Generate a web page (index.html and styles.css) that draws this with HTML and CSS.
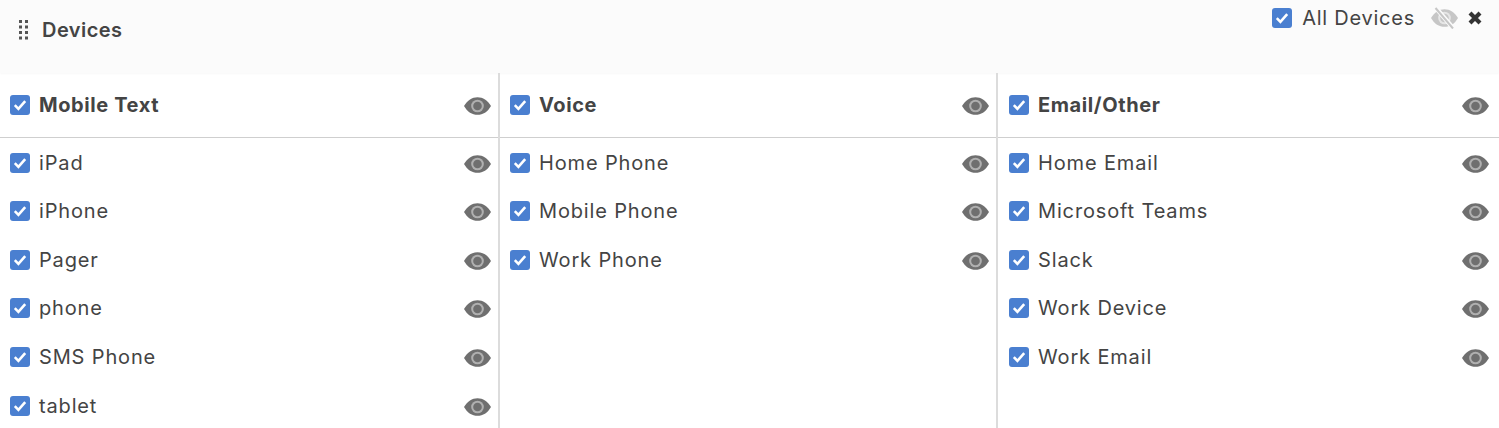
FILE: index.html
```html
<!DOCTYPE html>
<html lang="en">
<head>
    <meta charset="UTF-8">
    <title>Devices</title>
    <link rel="stylesheet" href="styles.css">
</head>
<body>
    <svg class="defs" width="0" height="0">
        <symbol id="check" viewBox="0 0 20 20">
            <rect width="20" height="20" rx="3" fill="#4a7fd0"/>
            <path d="M4.800 10.200l3.600 3.600 6.800-7.600" fill="none" stroke="#fff" stroke-width="2.600"/>
        </symbol>
        <symbol id="eye" viewBox="0 0 27 18">
            <path d="M0 9C3.500 3 8 .2 13.500 .2S23.500 3 27 9c-3.500 6-8 8.800-13.500 8.800S3.500 15 0 9z" fill="#6f6f6f"/>
            <circle cx="13.500" cy="9" r="6.300" fill="#b0b0b0"/>
            <circle cx="13.500" cy="9" r="4.300" fill="#6f6f6f"/>
        </symbol>
    </svg>

    <div class="panel-head">
        <div class="title">
            <svg class="grip" width="10" height="20" viewBox="0 0 10 20" fill="#555">
                <rect x="0" y="0" width="3" height="3"/><rect x="6" y="0" width="3" height="3"/>
                <rect x="0" y="5.500" width="3" height="3"/><rect x="6" y="5.500" width="3" height="3"/>
                <rect x="0" y="11" width="3" height="3"/><rect x="6" y="11" width="3" height="3"/>
                <rect x="0" y="16.500" width="3" height="3"/><rect x="6" y="16.500" width="3" height="3"/>
            </svg>
            <span>Devices</span>
        </div>
        <div class="actions">
            <svg class="box"><use href="#check"/></svg>
            <span class="all-label">All Devices</span>
            <svg class="eye-off" width="27" height="22" viewBox="0 0 27 22">
                <path d="M0 11C3.500 5 8 2.200 13.500 2.200S23.500 5 27 11c-3.500 6-8 8.800-13.500 8.800S3.500 17 0 11z" fill="#c6c6c6"/>
                <circle cx="13.500" cy="11" r="6.300" fill="#e6e6e6"/>
                <circle cx="13.500" cy="11" r="4.300" fill="#c6c6c6"/>
                <path d="M5 1l17 20" stroke="#fbfbfb" stroke-width="4.500"/>
                <path d="M4.500 1l17.500 20.500" stroke="#c6c6c6" stroke-width="2"/>
            </svg>
            <svg class="close" width="14" height="14" viewBox="0 0 14 14">
                <path d="M2 2l10 10M12 2L2 12" stroke="#333" stroke-width="4.200"/>
            </svg>
        </div>
    </div>

    <div class="columns">
        <div class="column">
            <div class="row head"><svg class="box"><use href="#check"/></svg><span class="name">Mobile Text</span><svg class="eye"><use href="#eye"/></svg></div>
            <div class="row"><svg class="box"><use href="#check"/></svg><span class="name">iPad</span><svg class="eye"><use href="#eye"/></svg></div>
            <div class="row"><svg class="box"><use href="#check"/></svg><span class="name">iPhone</span><svg class="eye"><use href="#eye"/></svg></div>
            <div class="row"><svg class="box"><use href="#check"/></svg><span class="name">Pager</span><svg class="eye"><use href="#eye"/></svg></div>
            <div class="row"><svg class="box"><use href="#check"/></svg><span class="name">phone</span><svg class="eye"><use href="#eye"/></svg></div>
            <div class="row"><svg class="box"><use href="#check"/></svg><span class="name">SMS Phone</span><svg class="eye"><use href="#eye"/></svg></div>
            <div class="row"><svg class="box"><use href="#check"/></svg><span class="name">tablet</span><svg class="eye"><use href="#eye"/></svg></div>
        </div>
        <div class="column">
            <div class="row head"><svg class="box"><use href="#check"/></svg><span class="name">Voice</span><svg class="eye"><use href="#eye"/></svg></div>
            <div class="row"><svg class="box"><use href="#check"/></svg><span class="name">Home Phone</span><svg class="eye"><use href="#eye"/></svg></div>
            <div class="row"><svg class="box"><use href="#check"/></svg><span class="name">Mobile Phone</span><svg class="eye"><use href="#eye"/></svg></div>
            <div class="row"><svg class="box"><use href="#check"/></svg><span class="name">Work Phone</span><svg class="eye"><use href="#eye"/></svg></div>
        </div>
        <div class="column">
            <div class="row head"><svg class="box"><use href="#check"/></svg><span class="name">Email/Other</span><svg class="eye"><use href="#eye"/></svg></div>
            <div class="row"><svg class="box"><use href="#check"/></svg><span class="name">Home Email</span><svg class="eye"><use href="#eye"/></svg></div>
            <div class="row"><svg class="box"><use href="#check"/></svg><span class="name">Microsoft Teams</span><svg class="eye"><use href="#eye"/></svg></div>
            <div class="row"><svg class="box"><use href="#check"/></svg><span class="name">Slack</span><svg class="eye"><use href="#eye"/></svg></div>
            <div class="row"><svg class="box"><use href="#check"/></svg><span class="name">Work Device</span><svg class="eye"><use href="#eye"/></svg></div>
            <div class="row"><svg class="box"><use href="#check"/></svg><span class="name">Work Email</span><svg class="eye"><use href="#eye"/></svg></div>
        </div>
    </div>
</body>
</html>
```
FILE: styles.css
```css
html, body {
    height: 428px;
    overflow: hidden;
}
body {
    margin: 0;
    font-family: Inter, 'Noto Sans', sans-serif;
    color: #444;
    background-color: white;
}
.defs {
    display: block;
    height: 0;
}
.panel-head {
    height: 73px;
    background-color: #fbfbfb;
    display: flex;
    justify-content: space-between;
    align-items: flex-start;
    padding: 0 17px 0 19px;
    box-shadow: 0 1px 2px rgba(0, 0, 0, 0.03);
}
.title {
    display: flex;
    align-items: center;
    gap: 13px;
    height: 60px;
    font-size: 20px;
    font-weight: 600;
    letter-spacing: 0.45px;
}
.grip {
    display: block;
}
.actions {
    display: flex;
    align-items: center;
    height: 36px;
}
.all-label {
    font-size: 20px;
    margin-left: 10px;
    margin-right: 16px;
    letter-spacing: 0.75px;
}
.close {
    margin-left: 10px;
}
.box {
    width: 20px;
    height: 20px;
    flex: none;
}
.columns {
    display: grid;
    grid-template-columns: 500px 498px 1fr;
    height: 355px;
}
.column {
    border-right: 2px solid #dcdcdc;
}
.column:last-child {
    border-right: none;
}
.column:last-child .row {
    padding-left: 11px;
    padding-right: 10px;
}
.row {
    display: flex;
    align-items: center;
    height: 48.600px;
    padding: 0 7px 0 10px;
    font-size: 20px;
    letter-spacing: 0.85px;
}
.row .name {
    flex: 1;
    margin-left: 9px;
}
.row.head {
    height: 64.400px;
    border-bottom: 1px solid #cfcfcf;
    font-weight: 700;
    letter-spacing: 0.6px;
}
.eye {
    width: 27px;
    height: 18px;
    flex: none;
    margin-top: 2px;
}
```
